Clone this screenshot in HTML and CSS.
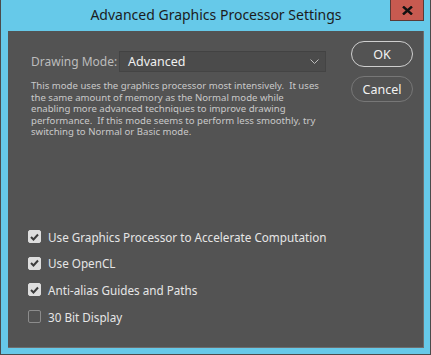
FILE: index.html
```html
<!DOCTYPE html>
<html>
<head>
<meta charset="utf-8">
<link rel="stylesheet" href="styles.css">
</head>
<body>
<div class="window">
  <div class="titlebar">
    <span class="title">Advanced Graphics Processor Settings</span>
    <button class="close" aria-label="Close">
      <svg width="11" height="9" viewBox="0 0 11 9"><path d="M1 0.5 L10 8.5 M10 0.5 L1 8.5" stroke="#111" stroke-width="2.4"/></svg>
    </button>
  </div>
  <div class="panel">
    <div class="top">
      <div class="main">
        <div class="mode-row">
          <span class="mode-label">Drawing Mode:</span>
          <div class="select">
            <span>Advanced</span>
            <svg class="chev" width="9" height="6" viewBox="0 0 9 6"><path d="M0.5 0.5 L4.5 4.5 L8.5 0.5" fill="none" stroke="#bdbdbd" stroke-width="1"/></svg>
          </div>
        </div>
        <p class="desc">This mode uses the graphics processor most intensively.&nbsp; It uses<br>the same amount of memory as the Normal mode while<br>enabling more advanced techniques to improve drawing<br>performance.&nbsp; If this mode seems to perform less smoothly, try<br>switching to Normal or Basic mode.</p>
      </div>
      <div class="buttons">
        <button class="btn primary">OK</button>
        <button class="btn">Cancel</button>
      </div>
    </div>
    <ul class="checks">
      <li><span class="box on"><svg width="9" height="8" viewBox="0 0 9 8"><path d="M1 4 L3.5 6.5 L8 1.5" fill="none" stroke="#3c3c3c" stroke-width="2"/></svg></span>Use Graphics Processor to Accelerate Computation</li>
      <li><span class="box on"><svg width="9" height="8" viewBox="0 0 9 8"><path d="M1 4 L3.5 6.5 L8 1.5" fill="none" stroke="#3c3c3c" stroke-width="2"/></svg></span>Use OpenCL</li>
      <li><span class="box on"><svg width="9" height="8" viewBox="0 0 9 8"><path d="M1 4 L3.5 6.5 L8 1.5" fill="none" stroke="#3c3c3c" stroke-width="2"/></svg></span>Anti-alias Guides and Paths</li>
      <li><span class="box"></span>30 Bit Display</li>
    </ul>
  </div>
</div>
</body>
</html>
```

FILE: styles.css
```css
* { box-sizing: border-box; }
html, body { margin: 0; padding: 0; }
body { font-family: "Noto Sans", "Open Sans", sans-serif; }

.window {
  width: 431px;
  height: 355px;
  background: #66c9e9;
  border: 1px solid #4b4b4b;
  border-top: none;
  display: flex;
  flex-direction: column;
  padding: 0 6px 6px 7px;
}

.titlebar {
  height: 31px;
  position: relative;
  display: flex;
  align-items: center;
  justify-content: center;
  padding-bottom: 3px;
}
.title {
  font-size: 14px;
  color: #1c1c1c;
}
.close {
  position: absolute;
  top: 0;
  right: 0;
  width: 34px;
  height: 21px;
  background: #c75a50;
  border: 1px solid #5a3a36;
  border-top: none;
  padding: 0;
  display: flex;
  align-items: center;
  justify-content: center;
}

.panel {
  flex: 1;
  background: #535353;
  border-right: 1px solid #6e6e6e;
  border-bottom: 1px solid #6e6e6e;
  display: flex;
  flex-direction: column;
  justify-content: space-between;
  padding: 10px 10px 24px 20px;
}

.top { display: flex; }
.main { flex: 1; padding-left: 3px; padding-top: 10px; }

.mode-row { display: flex; align-items: center; }
.mode-label {
  font-size: 12px;
  color: #bcbcbc;
  width: 88px;
}
.select {
  width: 207px;
  height: 21px;
  background: #4b4b4b;
  border: 1px solid #444;
  border-top-color: #424242;
  display: flex;
  align-items: center;
  justify-content: space-between;
  padding: 0 6px 0 8px;
  color: #f0f0f0;
  font-size: 12.5px;
}
.chev { margin-top: 1px; }

.desc {
  margin: 8px 0 0;
  font-size: 9.6px;
  line-height: 11.6px;
  color: #c9c9c9;
  white-space: nowrap;
}

.buttons {
  width: 62px;
  display: flex;
  flex-direction: column;
  gap: 9px;
}
.btn {
  height: 26px;
  width: 62px;
  border-radius: 13px;
  background: transparent;
  border: 1px solid #777;
  color: #f2f2f2;
  font-family: inherit;
  font-size: 12.5px;
  padding: 0;
}
.btn.primary { border: 1.5px solid #cfcfcf; }

.checks {
  list-style: none;
  margin: 0;
  padding: 0;
  display: flex;
  flex-direction: column;
  gap: 13.6px;
}
.checks li {
  display: flex;
  align-items: center;
  font-size: 11.7px;
  color: #e6e6e6;
  height: 13px;
}
.box {
  width: 13px;
  height: 13px;
  border-radius: 2px;
  border: 1px solid #8c8c8c;
  margin-right: 7px;
  display: flex;
  align-items: center;
  justify-content: center;
  flex: none;
}
.box.on { background: #dedede; border-color: #dedede; }
```
